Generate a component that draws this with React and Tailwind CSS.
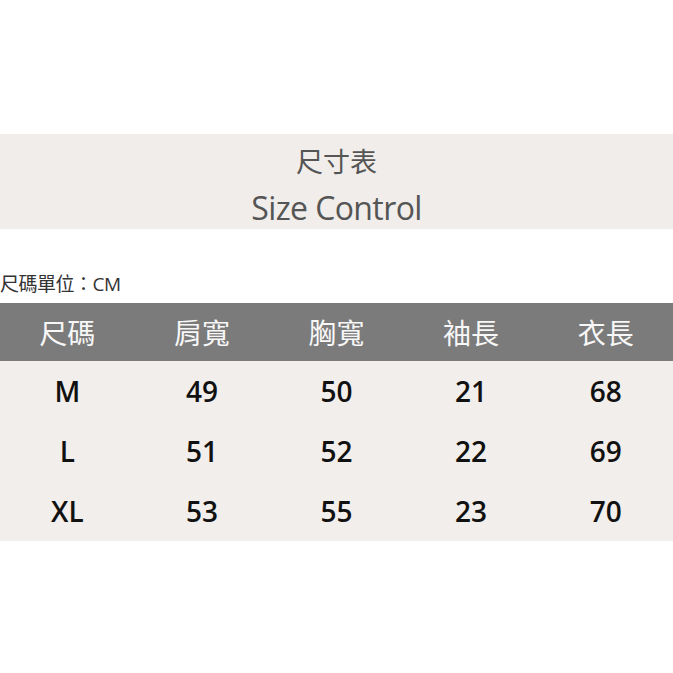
export default function App() {
  const cols = ["尺碼", "肩寬", "胸寬", "袖長", "衣長"];
  const rows = [
    ["M", "49", "50", "21", "68"],
    ["L", "51", "52", "22", "69"],
    ["XL", "53", "55", "23", "70"],
  ];
  const font = { fontFamily: '"Open Sans", "Noto Sans CJK TC", sans-serif' };
  return (
    <div className="w-[673px] h-[673px] bg-white flex flex-col" style={font}>
      <div className="h-[134px]" />
      <div className="h-[95px] bg-[#f0edea] flex flex-col items-center text-[#555555]">
        <div className="text-[27px] leading-none mt-[14px]">尺寸表</div>
        <div className="text-[32px] leading-none mt-[17px] tracking-[-0.6px]">Size Control</div>
      </div>
      <div className="h-[74px] flex items-end pb-[9px]">
        <div className="text-[19px] leading-none text-[#333333] tracking-[-0.5px]">尺碼單位：CM</div>
      </div>
      <div className="h-[58px] bg-[#7b7b7b] grid grid-cols-5 items-center text-[#f7f7f7]">
        {cols.map((c) => (
          <div key={c} className="text-center text-[28px] leading-none" style={{ fontFamily: '"Noto Sans CJK TC", sans-serif' }}>{c}</div>
        ))}
      </div>
      <div className="h-[180px] bg-[#f1eeeb] flex flex-col">
        {rows.map((r) => (
          <div key={r[0]} className="h-[60px] grid grid-cols-5 items-center text-[#111111]">
            {r.map((v, i) => (
              <div key={i} className="text-center text-[28px] font-semibold leading-none">{v}</div>
            ))}
          </div>
        ))}
      </div>
    </div>
  );
}
